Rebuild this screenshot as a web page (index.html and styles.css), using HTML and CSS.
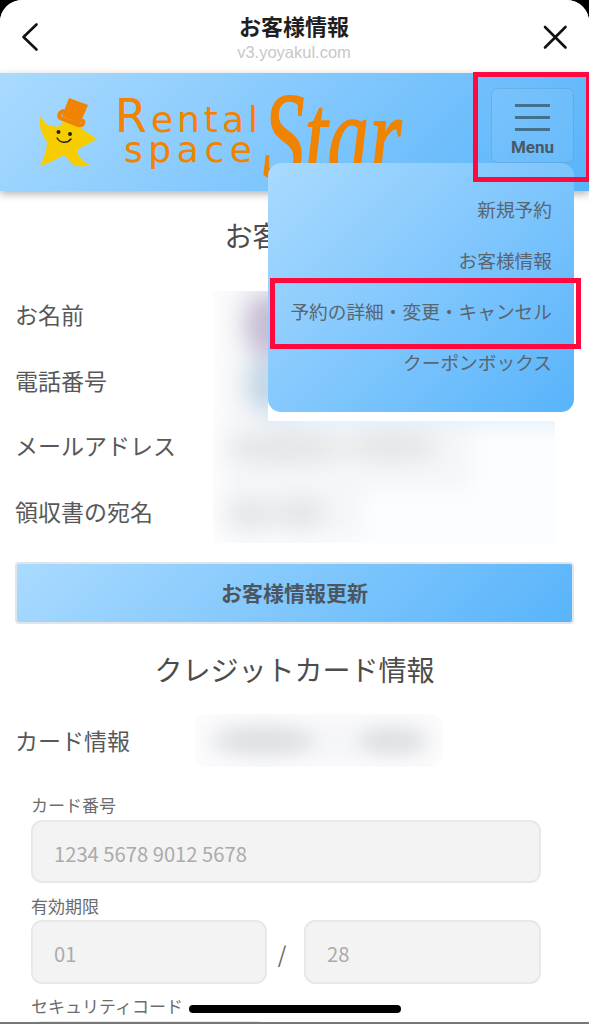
FILE: index.html
```html
<!DOCTYPE html>
<html lang="ja">
<head>
<meta charset="utf-8">
<title>お客様情報</title>
<link rel="stylesheet" href="styles.css">
</head>
<body>
<div class="screen">
  <header class="sheet-bar">
    <svg class="sheet-icon sheet-back" width="20" height="32" viewBox="0 0 20 32"><path d="M16.5 3.5 3.500 16l13 12.500"/></svg>
    <div class="sheet-title">
      <div class="sheet-name">お客様情報</div>
      <div class="sheet-url">v3.yoyakul.com</div>
    </div>
    <svg class="sheet-icon sheet-close" width="26" height="26" viewBox="0 0 26 26"><path d="M3 3l20.500 20.500M23.500 3 3 23.500"/></svg>
  </header>

  <div class="site-header">
    <svg class="logo" width="420" height="118" viewBox="0 73 420 118">
      <path class="logo-star" d="M41 115C43 124 50 128 60 126L64 120 76 125 97 139 77 150C78 156 83 163 91 165 84 167 77 167 72 164L64 155C56 159 48 164 40 166 44 158 47 150 47 142 41 134 38 124 41 115Z"/>
      <path class="logo-hat" d="M69 98 88 105 80 124 62 116Z"/>
      <path class="logo-brim" d="M63 111C58 113 58 118 63 119L78 125C82 126 84 124 83 121"/>
      <circle class="logo-face" cx="58.500" cy="132" r="2"/>
      <circle class="logo-face" cx="70" cy="134" r="2"/>
      <path class="logo-smile" d="M57 138C60 143 67 144 71 139"/>
      <text class="logo-small" x="115" y="132" textLength="143"><tspan class="logo-cap">R</tspan>ental</text>
      <text class="logo-small" x="124" y="162" textLength="128">space</text>
      <text class="logo-big" transform="translate(263 179) scale(0.67 1)">Star</text>
    </svg>
    <button class="menu-button">
      <span class="menu-line"></span>
      <span class="menu-line"></span>
      <span class="menu-line"></span>
      <span class="menu-label">Menu</span>
    </button>
  </div>

  <main class="content">
    <h2 class="section-title">お客様情報</h2>
    <section class="customer-grid">
      <div class="field-label">お名前</div>
      <div class="redacted-area">
        <svg class="redacted" width="342" height="252" viewBox="213 291 342 252">
          <defs>
            <filter id="blur-heavy" x="-30%" y="-30%" width="160%" height="160%"><feGaussianBlur stdDeviation="11"/></filter>
          </defs>
          <rect class="blob-base" x="213" y="291" width="342" height="252"/>
          <g filter="url(#blur-heavy)">
            <rect class="blob-wash" x="225" y="280" width="70" height="150"/>
            <rect class="blob-wash" x="222" y="425" width="250" height="65"/>
            <rect class="blob-wash" x="222" y="480" width="140" height="60"/>
            <ellipse class="blob-purple" cx="268" cy="325" rx="24" ry="34"/>
            <ellipse class="blob-blue" cx="266" cy="385" rx="20" ry="28"/>
            <ellipse class="blob-grey" cx="285" cy="448" rx="60" ry="16"/>
            <ellipse class="blob-grey" cx="392" cy="447" rx="48" ry="15"/>
            <ellipse class="blob-grey" cx="250" cy="514" rx="24" ry="15"/>
            <ellipse class="blob-grey" cx="300" cy="513" rx="26" ry="16"/>
            <rect class="blob-band" x="268" y="408" width="300" height="14"/>
          </g>
          <rect class="blob-clear" x="268" y="291" width="287" height="130"/>
        </svg>
      </div>
      <div class="field-label">電話番号</div>
      <div class="field-label">メールアドレス</div>
      <div class="field-label">領収書の宛名</div>
    </section>

    <button class="update-button">お客様情報更新</button>

    <h2 class="section-title card-title">クレジットカード情報</h2>

    <section class="card-summary">
      <div class="field-label card-label">カード情報</div>
      <svg class="redacted" width="248" height="53" viewBox="195 715 248 53">
        <defs>
          <filter id="blur-card" x="-30%" y="-60%" width="160%" height="220%"><feGaussianBlur stdDeviation="9"/></filter>
        </defs>
        <rect class="blob-base-faint" x="195" y="715" width="248" height="53" rx="12"/>
        <g filter="url(#blur-card)">
          <rect class="blob-wash" x="203" y="720" width="232" height="42" rx="18"/>
          <ellipse class="blob-card" cx="265" cy="742" rx="50" ry="15"/>
          <ellipse class="blob-card" cx="392" cy="742" rx="34" ry="14"/>
        </g>
      </svg>
    </section>

    <form class="card-form">
      <div class="input-label">カード番号</div>
      <div class="input-box input-number">1234 5678 9012 5678</div>
      <div class="input-label label-expiry">有効期限</div>
      <div class="expiry-row">
        <div class="input-box input-expiry">01</div>
        <span class="expiry-slash">/</span>
        <div class="input-box input-expiry">28</div>
      </div>
      <div class="input-label label-cvc">セキュリティコード</div>
      <div class="input-box input-cvc"></div>
    </form>
  </main>

  <nav class="dropdown">
    <a class="dropdown-item">新規予約</a>
    <a class="dropdown-item">お客様情報</a>
    <a class="dropdown-item">予約の詳細・変更・キャンセル</a>
    <a class="dropdown-item">クーポンボックス</a>
  </nav>

  <div class="mark mark-menu"></div>
  <div class="mark mark-item"></div>
  <div class="home-indicator"></div>
  <div class="bottom-line"></div>
</div>
</body>
</html>
```

FILE: styles.css
```css
* {
  box-sizing: border-box;
}

html,
body {
  margin: 0;
  background: #000;
}

body {
  font-family: "Noto Sans CJK JP", "Noto Sans", sans-serif;
}

.screen {
  position: relative;
  width: 589px;
  height: 1024px;
  overflow: hidden;
  background: #fff;
  border-radius: 22px 22px 0 0;
}

.sheet-bar {
  height: 73px;
  display: grid;
  grid-template-columns: 1fr auto 1fr;
  align-items: center;
  padding: 0 21px 0 20px;
  background: #fff;
}

.sheet-icon {
  fill: none;
  stroke: #111;
  stroke-width: 2.600;
  stroke-linecap: round;
  stroke-linejoin: round;
}

.sheet-back {
  justify-self: start;
}

.sheet-close {
  justify-self: end;
}

.sheet-title {
  display: flex;
  flex-direction: column;
  align-items: center;
  margin-top: -1px;
}

.sheet-name {
  font-size: 22px;
  font-weight: 700;
  line-height: 28px;
  color: #1f1f1f;
}

.sheet-url {
  font-family: "Liberation Sans", sans-serif;
  font-size: 16.500px;
  line-height: 20px;
  margin-top: 3px;
  color: #c8c8c8;
}

.site-header {
  position: relative;
  z-index: 1;
  height: 118px;
  display: flex;
  justify-content: space-between;
  align-items: flex-start;
  padding: 0 15px 0 0;
  background: linear-gradient(135deg, #aadaff 0%, #58b4fb 100%);
  box-shadow: 0 3px 8px rgba(0, 0, 0, 0.3);
}

.logo {
  display: block;
  flex: none;
}

.logo-star {
  fill: #f6cd00;
}

.logo-hat {
  fill: #f08300;
}

.logo-brim {
  fill: none;
  stroke: #f08300;
  stroke-width: 4;
  stroke-linecap: round;
}

.logo-face {
  fill: #222;
}

.logo-smile {
  fill: none;
  stroke: #222;
  stroke-width: 1.400;
  stroke-linecap: round;
}

.logo-small {
  font-family: "DejaVu Sans", sans-serif;
  font-size: 36px;
  fill: #f08300;
}

.logo-cap {
  font-size: 46px;
}

.logo-big {
  font-family: "Liberation Serif", serif;
  font-style: italic;
  font-size: 124px;
  fill: #f08300;
  stroke: #f08300;
  stroke-width: 1.500;
}

.menu-button {
  width: 83px;
  height: 75px;
  margin-top: 15px;
  padding: 15px 0 0;
  display: flex;
  flex-direction: column;
  align-items: center;
  font-family: inherit;
  background: rgba(255, 255, 255, 0.07);
  border: 1px solid rgba(60, 110, 160, 0.22);
  border-radius: 6px;
}

.menu-line {
  width: 35px;
  height: 2.500px;
  margin-bottom: 9.500px;
  background: #44708f;
}

.menu-label {
  font-family: "Roboto", sans-serif;
  font-weight: 700;
  font-size: 17px;
  line-height: 18px;
  margin-top: -2px;
  color: #4a5866;
}

.content {
  display: block;
  padding: 24px 15px 0;
}

.section-title {
  margin: 0;
  font-size: 28px;
  font-weight: 400;
  line-height: 40px;
  text-align: center;
  color: #4c4c4c;
}

.customer-grid {
  display: grid;
  grid-template-columns: 198px 342px;
  grid-auto-rows: 65.750px;
  margin-top: 26px;
}

.field-label {
  grid-column: 1;
  display: flex;
  align-items: center;
  font-size: 23px;
  line-height: 30px;
  color: #585858;
}

.card-label {
  padding-bottom: 2px;
}

.redacted-area {
  grid-column: 2;
  grid-row: 1 / span 4;
  padding-top: 10px;
}

.redacted {
  display: block;
  flex: none;
}

.blob-base {
  fill: #fcfdfe;
}

.blob-base-faint {
  fill: #fcfcfd;
}

.blob-wash {
  fill: #f5f6f8;
}

.blob-purple {
  fill: #c8bcd6;
}

.blob-blue {
  fill: #c0d6e6;
}

.blob-grey {
  fill: #e4e5e7;
}

.blob-card {
  fill: #dfe0e2;
}

.blob-band {
  fill: #d6e9fa;
}

.blob-clear {
  fill: #fff;
}

.update-button {
  display: block;
  width: 559px;
  height: 62px;
  margin-top: 18px;
  padding: 0 0 2px;
  font-family: inherit;
  font-size: 21px;
  font-weight: 700;
  color: #4b5661;
  background: linear-gradient(135deg, #aadaff 0%, #58b4fb 100%);
  border: 2px solid #e2e5e8;
  border-radius: 4px;
}

.card-title {
  margin-top: 25px;
}

.card-summary {
  display: grid;
  grid-template-columns: 180px 248px;
  height: 53px;
  margin-top: 25px;
}

.card-form {
  width: 510px;
  margin: 26px 0 0 16px;
}

.input-label {
  font-size: 17px;
  line-height: 24px;
  color: #6c6c6c;
}

.label-expiry {
  margin-top: 11px;
}

.label-cvc {
  margin-top: 10px;
}

.input-box {
  display: flex;
  align-items: center;
  padding-left: 21px;
  font-size: 20.200px;
  color: #ababab;
  background: #f3f3f3;
  border: 2px solid #e8e8e8;
  border-radius: 11px;
}

.input-number {
  height: 63px;
  margin-top: 3px;
  padding-top: 3px;
}

.expiry-row {
  display: grid;
  grid-template-columns: 236px 1fr 237px;
  align-items: center;
  margin-top: 2px;
}

.input-expiry {
  height: 64px;
  padding-top: 3px;
}

.expiry-slash {
  padding: 1px 7px 0 0;
  text-align: center;
  font-size: 22px;
  color: #666;
}

.input-cvc {
  width: 236px;
  height: 64px;
  margin-top: 3px;
}

.dropdown {
  position: absolute;
  z-index: 2;
  top: 163px;
  left: 268px;
  width: 306px;
  height: 249px;
  padding-top: 20px;
  display: flex;
  flex-direction: column;
  background: linear-gradient(135deg, #aadaff 0%, #58b4fb 100%);
  border-radius: 13px;
}

.dropdown-item {
  height: 51px;
  padding-right: 22px;
  display: flex;
  align-items: center;
  justify-content: flex-end;
  font-size: 18.700px;
  color: #5a6570;
}

.mark {
  position: absolute;
  z-index: 3;
  border: 5px solid #ff0a3f;
}

.mark-menu {
  top: 72px;
  left: 473px;
  width: 118px;
  height: 110px;
}

.mark-item {
  top: 278px;
  left: 270px;
  width: 311px;
  height: 71px;
}

.home-indicator {
  position: absolute;
  z-index: 4;
  left: 189px;
  top: 1005px;
  width: 212px;
  height: 8px;
  background: #000;
  border-radius: 4px;
}

.bottom-line {
  position: absolute;
  z-index: 4;
  left: 0;
  bottom: 0;
  width: 100%;
  height: 2px;
  background: #777;
}
```
